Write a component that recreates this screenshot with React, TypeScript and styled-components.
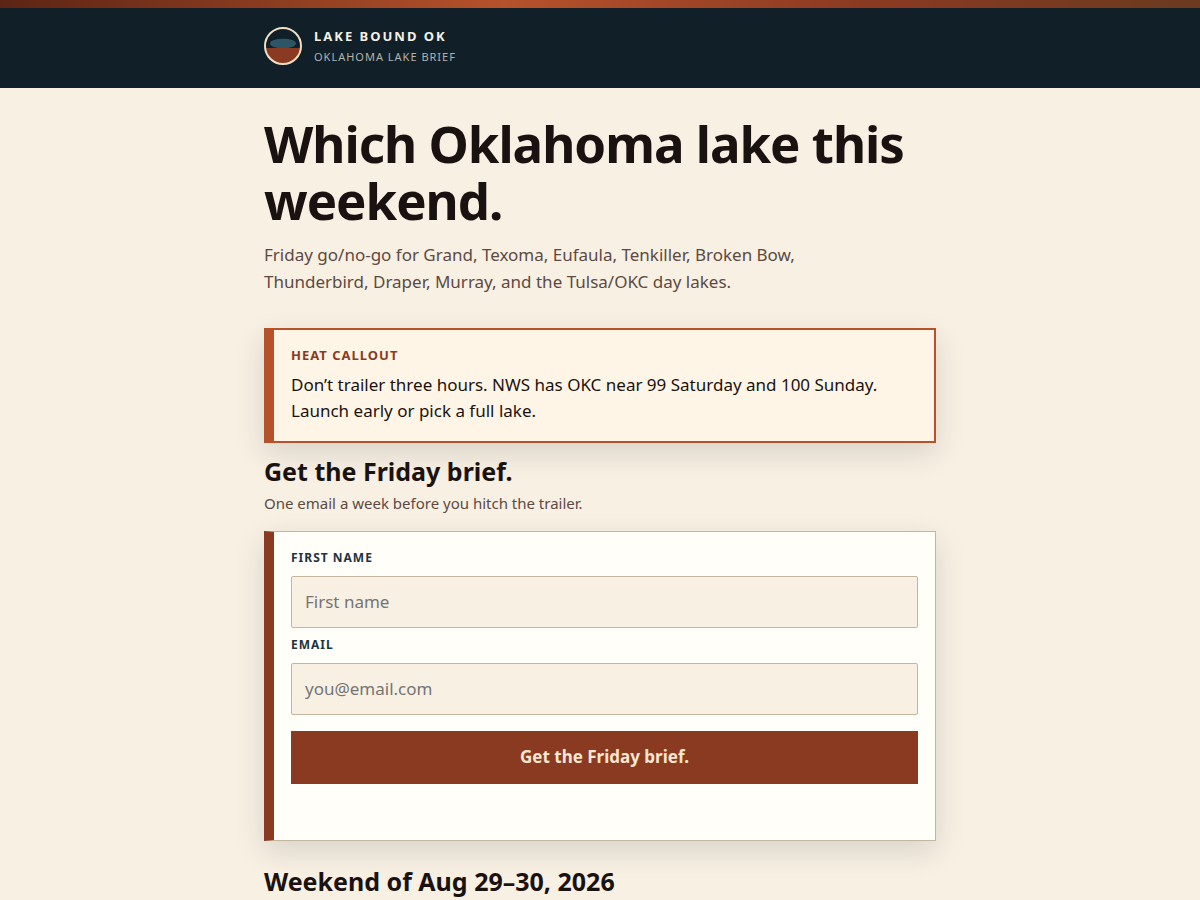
import React from "react";
import styled, { createGlobalStyle } from "styled-components";

const Global = createGlobalStyle`
  *, *::before, *::after { box-sizing: border-box; }
  body {
    margin: 0;
    background: #f8f0e3;
    color: #1a1210;
    font-family: "Noto Sans", sans-serif;
    font-size: 17px;
    line-height: 26px;
    overflow-x: hidden;
  }
  h1, h2, p { margin: 0; }
`;

const Stripe = styled.div`
  height: 8px;
  background: linear-gradient(90deg, #5c2414, #b5522b 42%, #8b3a22 72%, #6b3a1f);
`;

const Header = styled.header`
  background: #112028;
  padding: 17px 24px 21px;
`;

const Column = styled.div`
  max-width: 672px;
  margin: 0 auto;
`;

const Brand = styled.a`
  display: flex;
  align-items: center;
  gap: 12px;
  color: #f8efe2;
  text-decoration: none;
`;

const BrandName = styled.span`
  display: block;
  font-size: 13px;
  line-height: 22px;
  font-weight: 700;
  letter-spacing: 2px;
`;

const BrandTag = styled.span`
  display: block;
  font-size: 11px;
  line-height: 20px;
  letter-spacing: 1px;
  color: #b5b1a8;
`;

const Main = styled.main`
  padding: 27px 24px 40px;
`;

const Title = styled.h1`
  font-size: 51px;
  line-height: 57px;
  font-weight: 700;
  letter-spacing: -1px;
`;

const Lede = styled.p`
  max-width: 560px;
  margin-top: 12px;
  font-size: 17px;
  line-height: 27px;
  color: #5c4a42;
`;

const Callout = styled.section`
  margin-top: 33px;
  padding: 15px 17px 17px;
  border: 2px solid #b5522b;
  border-left-width: 10px;
  background: #fff5e6;
  box-shadow: 0 10px 28px rgba(18, 33, 42, 0.14);
`;

const CalloutLabel = styled.p`
  font-size: 13px;
  line-height: 20px;
  font-weight: 700;
  letter-spacing: 1px;
  color: #8b3a22;
  margin-bottom: 7px;
`;

const Heading = styled.h2`
  font-size: 25px;
  line-height: 30px;
  font-weight: 700;
  margin-top: 13px;
`;

const Note = styled.p`
  margin-top: 5px;
  font-size: 15px;
  line-height: 24px;
  color: #5c4a42;
`;

const Form = styled.form`
  margin: 16px 0 25px;
  padding: 16px 17px 56px;
  border: 1px solid #c4b69c;
  border-left: 10px solid #8b3a22;
  background: #fffef9;
  box-shadow: 0 10px 28px rgba(18, 33, 42, 0.14);
`;

const Label = styled.label`
  display: block;
  font-size: 12px;
  line-height: 20px;
  font-weight: 700;
  letter-spacing: 1px;
  color: #1c3540;
`;

const Input = styled.input`
  display: block;
  width: 100%;
  height: 52px;
  margin: 8px 0 7px;
  padding: 0 13px 2px;
  border: 1px solid #c4b69c;
  border-radius: 2px;
  background: #f8f0e3;
  font: inherit;
  color: inherit;
  &::placeholder { color: #757575; }
`;

const Submit = styled.button`
  display: block;
  width: 100%;
  height: 53px;
  margin-top: 16px;
  padding: 0 16px 2px;
  border: 0;
  background: #8b3a22;
  color: #f8e6d0;
  font: inherit;
  font-weight: 700;
`;

const Logo = () => (
  <svg width="38" height="38" viewBox="0 0 38 38" aria-hidden="true">
    <defs><clipPath id="disc"><circle cx="19" cy="19" r="18" /></clipPath></defs>
    <g clipPath="url(#disc)">
      <rect width="38" height="38" fill="#112028" />
      <ellipse cx="19" cy="16.5" rx="13" ry="4.8" fill="#2c5566" />
      <rect y="21" width="38" height="17" fill="#8b3a22" />
    </g>
    <circle cx="19" cy="19" r="18" fill="none" stroke="#f0dfc4" strokeWidth="2" />
  </svg>
);

export default function App() {
  return (
    <>
      <Global />
      <Stripe />
      <Header>
        <Column>
          <Brand href="#">
            <Logo />
            <span>
              <BrandName>LAKE BOUND OK</BrandName>
              <BrandTag>OKLAHOMA LAKE BRIEF</BrandTag>
            </span>
          </Brand>
        </Column>
      </Header>
      <Main>
        <Column>
          <Title>Which Oklahoma lake this weekend.</Title>
          <Lede>
            Friday go/no-go for Grand, Texoma, Eufaula, Tenkiller, Broken Bow,
            Thunderbird, Draper, Murray, and the Tulsa/OKC day lakes.
          </Lede>
          <Callout>
            <CalloutLabel>HEAT CALLOUT</CalloutLabel>
            <p>
              Don’t trailer three hours. NWS has OKC near 99 Saturday and 100 Sunday.
              Launch early or pick a full lake.
            </p>
          </Callout>
          <Heading>Get the Friday brief.</Heading>
          <Note>One email a week before you hitch the trailer.</Note>
          <Form onSubmit={(e) => e.preventDefault()}>
            <Label htmlFor="first-name">FIRST NAME</Label>
            <Input id="first-name" type="text" placeholder="First name" />
            <Label htmlFor="email">EMAIL</Label>
            <Input id="email" type="email" placeholder="you@email.com" />
            <Submit type="submit">Get the Friday brief.</Submit>
          </Form>
          <Heading>Weekend of Aug 29–30, 2026</Heading>
        </Column>
      </Main>
    </>
  );
}
